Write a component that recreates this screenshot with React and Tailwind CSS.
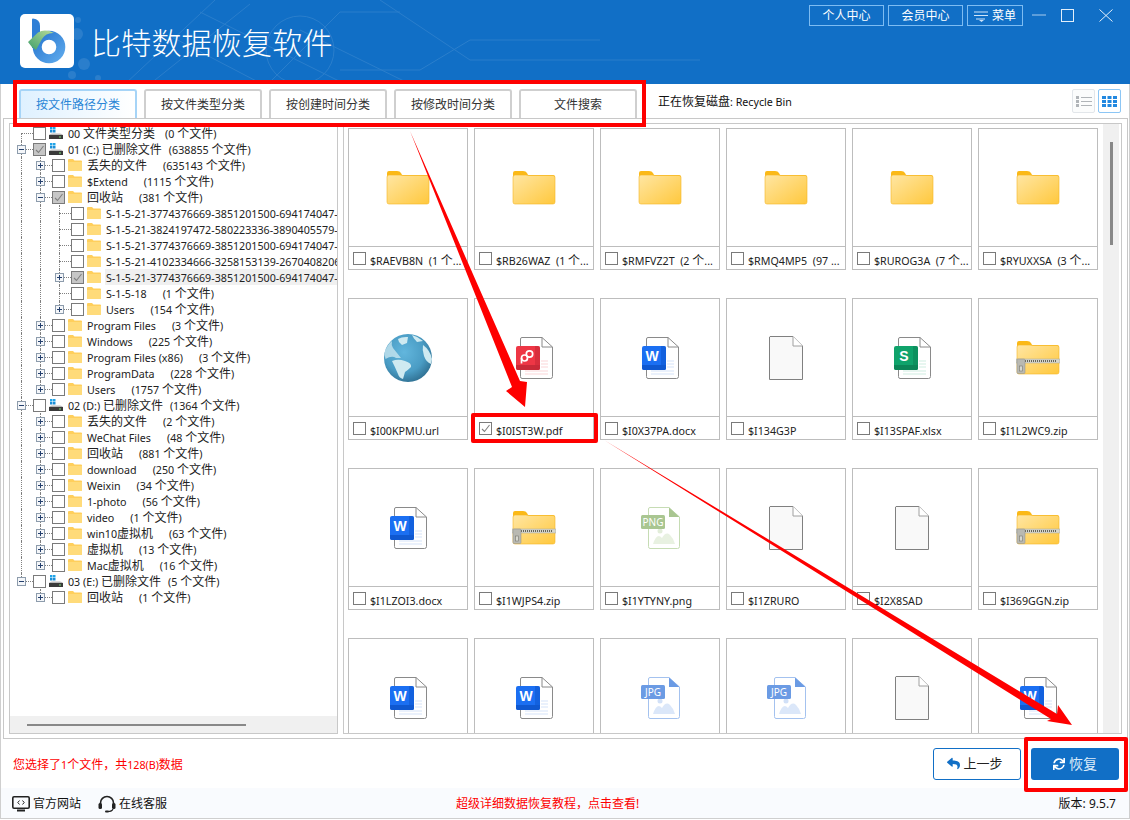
import React from "react";
import { FaReply, FaSync } from "react-icons/fa";

const tabs = ["按文件路径分类", "按文件类型分类", "按创建时间分类", "按修改时间分类", "文件搜索"];

const sid = (a, b, c) => `S-1-5-21-${a}-${b}-${c}-1001`;

const tree = [
    { name: "00 文件类型分类", count: "(0 个文件)", drive: true, gap: "ml-[10px]" },
    {
        name: "01 (C:) 已删除文件",
        count: "(638855 个文件)",
        drive: true,
        open: true,
        checked: true,
        gap: "ml-[7px]",
        children: [
            { name: "丢失的文件", count: "(635143 个文件)", closed: true },
            { name: "$Extend", count: "(1115 个文件)", closed: true },
            {
                name: "回收站",
                count: "(381 个文件)",
                open: true,
                checked: true,
                children: [
                    { name: sid("3774376669", "3851201500", "694174047") },
                    { name: sid("3824197472", "580223336", "3890405579") },
                    { name: sid("3774376669", "3851201500", "694174047") },
                    { name: sid("4102334666", "3258153139", "2670408206") },
                    {
                        name: sid("3774376669", "3851201500", "694174047"),
                        closed: true,
                        checked: true,
                        selected: true,
                    },
                    { name: "S-1-5-18", count: "(1 个文件)" },
                    { name: "Users", count: "(154 个文件)", closed: true },
                ],
            },
            { name: "Program Files", count: "(3 个文件)", closed: true },
            { name: "Windows", count: "(225 个文件)", closed: true },
            { name: "Program Files (x86)", count: "(3 个文件)", closed: true },
            { name: "ProgramData", count: "(228 个文件)", closed: true },
            { name: "Users", count: "(1757 个文件)", closed: true },
        ],
    },
    {
        name: "02 (D:) 已删除文件",
        count: "(1364 个文件)",
        drive: true,
        open: true,
        gap: "ml-[7px]",
        children: [
            { name: "丢失的文件", count: "(2 个文件)", closed: true },
            { name: "WeChat Files", count: "(48 个文件)", closed: true },
            { name: "回收站", count: "(881 个文件)", closed: true },
            { name: "download", count: "(250 个文件)", closed: true },
            { name: "Weixin", count: "(34 个文件)", closed: true },
            { name: "1-photo", count: "(56 个文件)", closed: true },
            { name: "video", count: "(1 个文件)", closed: true },
            { name: "win10虚拟机", count: "(63 个文件)", closed: true },
            { name: "虚拟机", count: "(13 个文件)", closed: true },
            { name: "Mac虚拟机", count: "(16 个文件)", closed: true },
        ],
    },
    {
        name: "03 (E:) 已删除文件",
        count: "(5 个文件)",
        drive: true,
        open: true,
        gap: "ml-[7px]",
        children: [{ name: "回收站", count: "(1 个文件)", closed: true }],
    },
];

const files = [
    ["folder", "$RAEVB8N  (1 个..."],
    ["folder", "$RB26WAZ  (1 个..."],
    ["folder", "$RMFVZ2T  (2 个..."],
    ["folder", "$RMQ4MP5  (97 ..."],
    ["folder", "$RUROG3A  (7 个..."],
    ["folder", "$RYUXXSA  (3 个..."],
    ["globe", "$I00KPMU.url"],
    ["pdf", "$I0IST3W.pdf", true],
    ["word", "$I0X37PA.docx"],
    ["blank", "$I134G3P"],
    ["excel", "$I13SPAF.xlsx"],
    ["zip", "$I1L2WC9.zip"],
    ["word", "$I1LZOI3.docx"],
    ["zip", "$I1WJPS4.zip"],
    ["png", "$I1YTYNY.png"],
    ["blank", "$I1ZRURO"],
    ["blank", "$I2X8SAD"],
    ["zip", "$I369GGN.zip"],
    ["word", "$I3A7KQ2.docx"],
    ["word", "$I3D9MX1.docx"],
    ["jpg", "$I3F2LPA.jpg"],
    ["jpg", "$I3H8TYE.jpg"],
    ["blank", "$I3K5WNO"],
    ["word", "$I3N1ZUC.docx"],
];

const flatten = (nodes, level = 0, guides = []) =>
    nodes.flatMap((node, i) => {
        const hasNext = i < nodes.length - 1;
        const row = { ...node, level, guides, hasNext, first: level === 0 && i === 0 };
        return [row, ...(node.children ? flatten(node.children, level + 1, [...guides, hasNext]) : [])];
    });

// latin runs sit smaller than the chinese ones in this app's font
const Mixed = ({ text }) => (
    <span className="text-[10.7px]">
        {text.split(/([\u4e00-\u9fff，]+)/).map((part, i) =>
            i % 2 ? (
                <span key={i} className="text-xs">
                    {part}
                </span>
            ) : (
                part
            )
        )}
    </span>
);

const Logo = () => (
    <svg viewBox="0 0 54 54" className="w-[54px] h-[54px]">
        <defs>
            <linearGradient id="logoRing" x1="0" y1="0" x2="1" y2="1">
                <stop offset="0" stopColor="#2a78d0" />
                <stop offset="1" stopColor="#5aa6ea" />
            </linearGradient>
            <linearGradient id="logoArrow" x1="0" y1="1" x2="1" y2="0">
                <stop offset="0" stopColor="#3f9f6a" />
                <stop offset="1" stopColor="#b8dc9a" />
            </linearGradient>
        </defs>
        <rect width="54" height="54" rx="5" fill="#fff" />
        <path d="M12 5.500 Q12 4.500 13 4.500 Q20 5 20 12 L20 34 L12 34 Z" fill="#2f7fd6" />
        <circle cx="29" cy="33" r="11.800" fill="none" stroke="url(#logoRing)" strokeWidth="9" />
        <path d="M8 28 L18 18.500 Q25 14.500 34 19 Q26 18.500 22 25 L16 36 Q11 33 8 28 Z" fill="url(#logoArrow)" />
    </svg>
);

const HeaderPattern = () => (
    <svg className="absolute inset-0 w-full h-full pointer-events-none" viewBox="0 0 1130 84">
        <g fill="#fff" opacity="0.1">
            <circle cx="78" cy="20" r="3" />
            <circle cx="77" cy="34" r="6" />
            <circle cx="84" cy="64" r="6" />
            <circle cx="72" cy="75" r="4" />
            <circle cx="98" cy="78" r="3" />
        </g>
        <g fill="none" stroke="#fff" strokeWidth="1" opacity="0.1">
            <path d="M125 84 L215 0 M150 84 L250 4 M268 84 L340 12 L400 12" />
            <path d="M170 36 L262 84 M200 12 L345 84 M300 30 L410 84 L470 84" />
            <path d="M340 70 L420 70 L470 40 L600 40 M380 0 L470 60 L700 60" />
            <circle cx="300" cy="50" r="34" />
        </g>
    </svg>
);

const WindowControls = () => (
    <div className="flex items-start ml-[9px]">
        <svg viewBox="0 0 14 12" className="w-[14px] h-[12px] mt-[4px]">
            <path d="M0 6 H14" stroke="#a9cdee" strokeWidth="1" />
        </svg>
        <svg viewBox="0 0 13 13" className="w-[13px] h-[13px] mt-[4px] ml-[15px]">
            <rect x="0.500" y="0.500" width="12" height="12" fill="none" stroke="#e3effa" strokeWidth="1" />
        </svg>
        <svg viewBox="0 0 14 13" className="w-[14px] h-[13px] mt-[4px] ml-[25px]">
            <path d="M0.500 0.500 L13.500 12.500 M13.500 0.500 L0.500 12.500" stroke="#e3effa" strokeWidth="1" />
        </svg>
    </div>
);

const TopButton = ({ className, children }) => (
    <button className={`h-[21px] border border-[#7dbcf2] text-white text-xs flex items-center justify-center ${className}`}>
        {children}
    </button>
);

const Header = () => (
    <div className="relative h-[84px] bg-[#116fc6] flex justify-between overflow-hidden">
        <HeaderPattern />
        <div className="relative flex items-start pl-[20px] pt-[14px]">
            <Logo />
            <span className="ml-[17px] mt-[10px] text-[30px] leading-[38px] tracking-[0.2px] text-white font-light">比特数据恢复软件</span>
        </div>
        <div className="relative flex items-start pt-[5px] pr-[17px]">
            <div className="flex gap-[4px]">
                <TopButton className="w-[75px]">个人中心</TopButton>
                <TopButton className="w-[75px]">会员中心</TopButton>
                <TopButton className="w-[56px] gap-[4px]">
                    <svg viewBox="0 0 14 12" className="w-[14px] h-[12px]">
                        <path d="M0 2 H14 M0 5.500 H14 M2 9 H11" stroke="#cfe4f8" strokeWidth="1" />
                        <path d="M5 10 H10 L7.500 12 Z" fill="#cfe4f8" />
                    </svg>
                    菜单
                </TopButton>
            </div>
            <WindowControls />
        </div>
    </div>
);

const Toolbar = () => (
    <div className="h-[34px] flex justify-between pl-[18px] pr-[8px]">
        <div className="flex items-end">
            <div className="flex gap-[7px]">
                {tabs.map((tab, i) => (
                    <div
                        key={tab}
                        className={`w-[118px] h-[29px] rounded-t-[3px] border-2 border-b-0 flex items-center justify-center text-xs ${
                            i === 0
                                ? "border-[#a6d4f7] bg-gradient-to-r from-[#dff1ff] to-white text-[#2a86d6]"
                                : "border-[#cfcfcf] bg-white text-[#333]"
                        }`}
                    >
                        {tab}
                    </div>
                ))}
            </div>
            <span className="ml-[21px] mb-[8px] leading-[14px] text-[#111]">
                <Mixed text="正在恢复磁盘: Recycle Bin" />
            </span>
        </div>
        <div className="flex gap-[3px] pt-[5px]">
            <div className="w-[23px] h-[24px] border border-[#e2e6ea] rounded-[2px] bg-[#fbfcfc] flex items-center justify-center">
                <svg viewBox="0 0 16 11" className="w-[16px] h-[11px]">
                    <path d="M0 0 H3 V3 H0 Z M0 4 H3 V7 H0 Z M0 8 H3 V11 H0 Z" fill="#b0b4b8" />
                    <path d="M5 1.500 H16 M5 5.500 H16 M5 9.500 H16" stroke="#b0b4b8" strokeWidth="1" />
                </svg>
            </div>
            <div className="w-[23px] h-[24px] border border-[#8cc6f5] rounded-[2px] bg-white flex items-center justify-center">
                <svg viewBox="0 0 15 11" className="w-[15px] h-[11px]" fill="#2288e0">
                    <path d="M0 0 H4 V3 H0 Z M5.500 0 H9.500 V3 H5.500 Z M11 0 H15 V3 H11 Z" />
                    <path d="M0 4 H4 V7 H0 Z M5.500 4 H9.500 V7 H5.500 Z M11 4 H15 V7 H11 Z" />
                    <path d="M0 8 H4 V11 H0 Z M5.500 8 H9.500 V11 H5.500 Z M11 8 H15 V11 H11 Z" />
                </svg>
            </div>
        </div>
    </div>
);

const Check = ({ checked, tree }) => (
    <span
        className={`shrink-0 w-[13px] h-[13px] border border-[#7a7a7a] flex items-center justify-center ${
            checked && tree ? "bg-[#c6c6c6]" : "bg-white"
        }`}
    >
        {checked && (
            <svg viewBox="0 0 11 11" className="w-[11px] h-[11px]">
                <path d="M2 6 L4.500 8.500 L9.500 2" fill="none" stroke="#808080" strokeWidth="1.100" />
            </svg>
        )}
    </span>
);

const TreeFolder = () => (
    <svg viewBox="0 0 14 12" className="shrink-0 w-[14px] h-[12px]">
        <path d="M0 1 Q0 0 1 0 H5 L6.500 1.500 H13 Q14 1.500 14 2.500 V11 Q14 12 13 12 H1 Q0 12 0 11 Z" fill="#ffcf5c" />
        <path d="M0 3 H14 V11 Q14 12 13 12 H1 Q0 12 0 11 Z" fill="#ffdb7a" />
    </svg>
);

const DriveIcon = () => (
    <svg viewBox="0 0 14 12" className="shrink-0 w-[14px] h-[12px]">
        <path d="M1 0 H3.500 V2.500 H1 Z M4 0 H6.500 V2.500 H4 Z" fill="#1fa3e8" />
        <path d="M1 3 H3.500 V5.500 H1 Z M4 3 H6.500 V5.500 H4 Z" fill="#1b8fd8" />
        <path d="M0 8 Q1 6.500 3 6.500 H11 Q13 6.500 14 8 Z" fill="#b9b9b9" />
        <rect x="0" y="8" width="14" height="4" fill="#3a3a3a" />
        <rect x="10" y="9.500" width="2" height="1" fill="#7adf7a" />
    </svg>
);

const Expander = ({ node }) => (
    <span className="relative shrink-0 w-[19px] h-[16px]">
        {!node.first && <span className="absolute left-[9px] top-0 h-[8px] border-l border-dotted border-[#808080]" />}
        {node.hasNext && <span className="absolute left-[9px] top-[8px] h-[8px] border-l border-dotted border-[#808080]" />}
        <span className="absolute left-[9px] right-[-2px] top-[8px] border-t border-dotted border-[#808080]" />
        {(node.open || node.closed) && (
            <span className="absolute left-[5px] top-[4px] w-[9px] h-[9px] border border-[#8d9cac] bg-[#f4f6f9] flex items-center justify-center">
                <svg viewBox="0 0 7 7" className="w-[7px] h-[7px]">
                    <path d={node.open ? "M1 3.500 H6" : "M1 3.500 H6 M3.500 1 V6"} stroke="#24406e" strokeWidth="1" />
                </svg>
            </span>
        )}
    </span>
);

const TreeRow = ({ node }) => (
    <div className="flex items-center h-[16px] whitespace-nowrap text-[#222]">
        {node.guides.map((line, i) => (
            <span key={i} className="shrink-0 w-[19px] h-[16px] pl-[9px]">
                {line && <span className="block h-full border-l border-dotted border-[#808080]" />}
            </span>
        ))}
        <Expander node={node} />
        <span className="ml-[2px] flex items-center">
            <Check checked={node.checked} tree />
        </span>
        <span className="ml-[3px] flex items-center">{node.drive ? <DriveIcon /> : <TreeFolder />}</span>
        <span className={`ml-[4px] flex-1 pl-[1px] h-[16px] leading-[14px] ${node.selected ? "bg-[#f0f0f0]" : ""}`}>
            <Mixed text={node.name} />
            {node.count && (
                <span className={node.gap || "ml-[16px]"}>
                    <Mixed text={node.count} />
                </span>
            )}
        </span>
    </div>
);

const TreePanel = () => (
    <div className="w-[329px] shrink-0 border border-[#c8c8c8] flex flex-col overflow-hidden">
        <div className="flex-1 min-h-0 overflow-hidden pt-[1px] pl-[2px]">
            {flatten(tree).map((node, i) => (
                <TreeRow key={i} node={node} />
            ))}
        </div>
        <div className="h-[17px] shrink-0 bg-[#f0f0f0] flex items-center pl-[17px]">
            <div className="w-[219px] h-[2px] bg-[#888]" />
        </div>
    </div>
);

const PageOutline = ({ stroke = "#8a8a8a" }) => (
    <path
        d="M6 0.500 H26 L36.500 10 V39.500 Q36.500 41.500 34.500 41.500 H6 Q4.500 41.500 4.500 39.500 V2 Q4.500 0.500 6 0.500 Z M26 0.500 V10 H36.500"
        fill="#fff"
        stroke={stroke}
    />
);

const OfficeIcon = ({ color, dark, tint, letter }) => (
    <svg viewBox="0 0 37 42" className="w-[37px] h-[42px]">
        <PageOutline />
        <path d="M25 24 H32 M25 27 H32 M25 30 H32 M9 34 H32 M9 37 H32" stroke={tint} strokeWidth="1.500" />
        <rect x="0" y="9" width="24" height="24" rx="2" fill={color} />
        <path d="M0 28 H24 V31 Q24 33 22 33 H2 Q0 33 0 31 Z" fill={dark} />
        <path d="M19 9 H22 Q24 9 24 11 V31 Q24 33 22 33 H19 Z" fill={dark} opacity="0.600" />
        {letter === "P" ? (
            <g fill="none" stroke="#fff" strokeWidth="1.700">
                <circle cx="8.500" cy="21" r="3" />
                <circle cx="13.500" cy="17" r="3.200" />
                <path d="M5.500 21 V26.500" />
            </g>
        ) : (
            <text x="10" y="23.700" textAnchor="middle" fontSize="14" fontWeight="700" fill="#fff" fontFamily="Liberation Sans, sans-serif">
                {letter}
            </text>
        )}
    </svg>
);

const ImageFileIcon = ({ color, pale, label }) => (
    <svg viewBox="0 0 39 42" className="w-[39px] h-[42px]">
        <path d="M9 0.500 H28 L38.500 10 V39.500 Q38.500 41.500 36.500 41.500 H9 Q7.500 41.500 7.500 39.500 V2 Q7.500 0.500 9 0.500 Z" fill="#fff" stroke={pale} />
        <path d="M28 0.500 L38.500 10 H28 Z" fill={color} />
        <circle cx="19" cy="24" r="2.500" fill={pale} opacity="0.500" />
        <path d="M12 37 Q16 25 21 31 Q25 24 29 28 Q33 32 34 37 Z" fill={pale} opacity="0.400" />
        <rect x="0" y="8" width="24" height="14" rx="1.500" fill={color} />
        <text x="12" y="19" textAnchor="middle" fontSize="10" fill="#fff" fontFamily="Noto Sans, sans-serif">
            {label}
        </text>
    </svg>
);

const FolderBig = ({ zip }) => (
    <svg viewBox="0 0 44 34" className="w-[44px] h-[34px]">
        <defs>
            <linearGradient id="folderFill" x1="0" y1="0" x2="1" y2="1">
                <stop offset="0" stopColor="#ffe6a3" />
                <stop offset="1" stopColor="#ffc83d" />
            </linearGradient>
        </defs>
        <path d="M1 2 Q1 0 3 0 H11 Q14 0 15 2 L16 4 H41 Q43 4 43 6 V14 H1 Z" fill="#fbb917" />
        <path d="M1 6 Q1 4 3 4 H14 L17 4.500 H41 Q43 4.500 43 6.500 V31 Q43 33 41 33 H3 Q1 33 1 31 Z" fill="url(#folderFill)" stroke="#f5b524" strokeWidth="0.600" />
        {zip && (
            <g>
                <rect x="0" y="18" width="44" height="4" fill="#d6d6ca" stroke="#a8a89e" strokeWidth="0.500" />
                <path d="M7 20 H41" stroke="#66665c" strokeWidth="1.800" strokeDasharray="1 1" />
                <rect x="1" y="18" width="8" height="14.500" rx="1" fill="#b9b9b2" stroke="#8e8e86" strokeWidth="0.500" />
                <rect x="3.500" y="25" width="3" height="5" fill="#d8d8d0" stroke="#77776f" strokeWidth="0.600" />
            </g>
        )}
    </svg>
);

const BlankIcon = () => (
    <svg viewBox="0 0 34 44" className="w-[34px] h-[44px]">
        <path d="M1 0.500 H24 L33.500 10 V43.500 H0.500 V1 Z" fill="#f9f9f9" stroke="#808080" />
        <path d="M24 0.500 V10 H33.500" fill="#fff" stroke="#a0a0a0" />
    </svg>
);

const GlobeIcon = () => (
    <svg viewBox="0 0 48 48" className="w-[48px] h-[48px]">
        <defs>
            <radialGradient id="globeFill" cx="0.420" cy="0.380" r="0.700">
                <stop offset="0" stopColor="#62b6dd" />
                <stop offset="0.600" stopColor="#4a9cc4" />
                <stop offset="1" stopColor="#2a6788" />
            </radialGradient>
        </defs>
        <circle cx="24" cy="24" r="24" fill="url(#globeFill)" />
        <g fill="#cfeaf1">
            <path d="M1 17 Q4 10 8 7 Q7 11 9 14 L13 19 L17 24 L12 24 Q8 21 1.500 25 Q0 21 1 17 Z" opacity="0.750" />
            <path d="M14 5 Q18 2.500 24 3 L23 9 L18 11 L15 8 Z" />
            <path d="M28 1 Q34 2.500 39 7 L33 8 L30 4.500 Z" />
            <path d="M8 27 Q14 24.500 21 27 Q28 29 27 33 Q24 36 21 38 L19 45 Q15 44 14 40 Q11 33 8 27 Z" />
            <path d="M39 11 Q46 16 48 25 L47 30 Q42 28 40 22 Q38 16 39 11 Z" />
        </g>
    </svg>
);

const FileIcon = ({ type }) => {
    if (type === "folder") return <FolderBig />;
    if (type === "zip") return <FolderBig zip />;
    if (type === "blank") return <BlankIcon />;
    if (type === "globe") return <GlobeIcon />;
    if (type === "word") return <OfficeIcon color="#1b6ff2" dark="#0f58d0" tint="#e4edfb" letter="W" />;
    if (type === "pdf") return <OfficeIcon color="#ee3645" dark="#c92a38" tint="#fde3e5" letter="P" />;
    if (type === "excel") return <OfficeIcon color="#0fa36b" dark="#0b8557" tint="#e0f3ec" letter="S" />;
    if (type === "png") return <ImageFileIcon color="#a9c691" pale="#c6dcb4" label="PNG" />;
    return <ImageFileIcon color="#6b9be4" pale="#a4c2ef" label="JPG" />;
};

const FileCard = ({ type, name, checked }) => (
    <div className="h-[142px] border border-[#bdbdbd] flex flex-col">
        <div className="h-[118px] shrink-0 flex items-center justify-center border-b border-[#bdbdbd]">
            <FileIcon type={type} />
        </div>
        <div className="flex-1 flex items-center pl-[4px] gap-[4px] text-[#222] whitespace-pre overflow-hidden">
            <Check checked={checked} />
            <span className="pt-[1px]">
                <Mixed text={name} />
            </span>
        </div>
    </div>
);

const FilePanel = () => (
    <div className="flex-1 h-full border border-[#c8c8c8] flex justify-between pl-[4px] pr-[2px] overflow-hidden">
        <div className="w-[750px] pt-[4px] grid grid-cols-6 gap-x-[6px] gap-y-[28px] content-start">
            {files.map(([type, name, checked]) => (
                <FileCard key={name} type={type} name={name} checked={checked} />
            ))}
        </div>
        <div className="w-[16px] bg-[#f0f0f0] flex justify-center pt-[18px]">
            <div className="w-[3px] h-[103px] bg-[#888]" />
        </div>
    </div>
);

const MonitorIcon = () => (
    <svg viewBox="0 0 18 16" className="w-[18px] h-[16px]">
        <rect x="0.800" y="0.800" width="16.400" height="11.500" rx="1.200" fill="none" stroke="#222" strokeWidth="1.600" />
        <path d="M7.500 4.500 L5.800 6.500 L7.500 8.500 M10.500 4.500 L12.200 6.500 L10.500 8.500" fill="none" stroke="#222" strokeWidth="1" />
        <rect x="5" y="13.500" width="8" height="2" fill="#222" />
    </svg>
);

const HeadsetIcon = () => (
    <svg viewBox="0 0 18 18" className="w-[18px] h-[18px]">
        <path d="M2.500 10 V8 A6.500 6.500 0 0 1 15.500 8 V10" fill="none" stroke="#222" strokeWidth="1.600" />
        <rect x="0.500" y="8" width="3.500" height="6" rx="1.500" fill="#222" />
        <rect x="14" y="8" width="3.500" height="6" rx="1.500" fill="#222" />
        <path d="M15 14 Q14 16.500 10 16.500" fill="none" stroke="#222" strokeWidth="1.200" />
        <rect x="7" y="15.500" width="4" height="2" rx="1" fill="#222" />
    </svg>
);

// the red marks someone drew on top of the screenshot
const Annotations = () => (
    <>
        <svg className="absolute inset-0 w-[1130px] h-[820px] pointer-events-none" viewBox="0 0 1130 820">
            <path d="M410 131 L520 381 L527 382 L525 407 L506 391 L512 387 Z" fill="#fe0000" />
            <path d="M604 440 L1057 714 L1058 705 L1072 725 L1047 721 L1051 719 Z" fill="#fe0000" />
        </svg>
        <div className="absolute left-[13px] top-[80px] w-[633px] h-[47px] border-4 border-[#fe0000] pointer-events-none" />
        <div className="absolute left-[471px] top-[413px] w-[127px] h-[30px] border-4 border-[#fe0000] rounded-[2px] pointer-events-none" />
        <div className="absolute left-[1024px] top-[737px] w-[104px] h-[55px] border-4 border-[#fe0000] rounded-[2px] pointer-events-none" />
    </>
);

const App = () => {
    return (
        <div className="relative w-[1130px] h-[820px] overflow-hidden bg-white font-['Noto_Sans','Noto_Sans_CJK_SC',sans-serif]">
            <Header />
            <div className="border-x border-b border-[#cfcfcf] h-[735px] flex flex-col">
                <Toolbar />
                <div className="ml-[2px] mr-[1px] h-[621px] shrink-0 border border-[#c8c8c8] pt-[4px] pb-[4px] pl-[5px] pr-[5px] flex gap-[5px]">
                    <TreePanel />
                    <FilePanel />
                </div>
                <div className="h-[49px] shrink-0 flex items-center justify-between pl-[12px] pr-[10px]">
                    <span className="-mt-[2px] text-[#fe0000]">
                        <Mixed text="您选择了1个文件，共128(B)数据" />
                    </span>
                    <div className="flex gap-[10px]">
                        <button className="w-[88px] h-[32px] pr-[4px] rounded-[3px] border border-[#116fc6] bg-white flex items-center justify-center gap-[3px] text-[13px] text-[#222]">
                            <FaReply className="text-[#116fc6] text-[13px]" />
                            上一步
                        </button>
                        <button className="w-[88px] h-[32px] rounded-[3px] bg-[#116fc6] flex items-center justify-center gap-[4px] text-[14px] text-[#dcebf9]">
                            <FaSync className="text-[12px] text-white" />
                            恢复
                        </button>
                    </div>
                </div>
                <div className="flex-1 pt-[1px] bg-[#f9fbfe] flex items-center justify-between pl-[11px] pr-[13px] text-xs text-[#111]">
                    <div className="flex items-center w-[283px]">
                        <MonitorIcon />
                        <span className="ml-[3px]">官方网站</span>
                        <span className="ml-[17px]"><HeadsetIcon /></span>
                        <span className="ml-[3px]">在线客服</span>
                    </div>
                    <span className="text-[#fe0000]">超级详细数据恢复教程，点击查看!</span>
                    <span className="w-[316px] text-right">版本: 9.5.7</span>
                </div>
            </div>
            <Annotations />
        </div>
    );
};

export default App;
